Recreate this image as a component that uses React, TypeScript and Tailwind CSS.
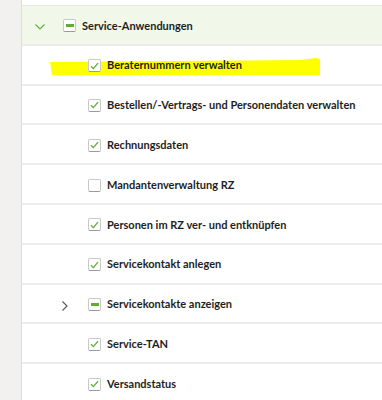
import React from 'react'

const items = [
  { id: 1, label: "Beraternummern verwalten", state: "checked", highlight: true },
  { id: 2, label: "Bestellen/-Vertrags- und Personendaten verwalten", state: "checked" },
  { id: 3, label: "Rechnungsdaten", state: "checked" },
  { id: 4, label: "Mandantenverwaltung RZ", state: "empty" },
  { id: 5, label: "Personen im RZ ver- und entknüpfen", state: "checked" },
  { id: 6, label: "Servicekontakt anlegen", state: "checked" },
  { id: 7, label: "Servicekontakte anzeigen", state: "partial", expandable: true },
  { id: 8, label: "Service-TAN", state: "checked" },
  { id: 9, label: "Versandstatus", state: "checked" },
]

const Checkbox = ( { state }: { state: string } ) => (
  <span className="relative flex items-center justify-center w-[13px] h-[13px] rounded-[2px] border border-[#c8c8c8] border-b-[#9a9a9a] bg-white shrink-0">
    { state === "checked" && (
      <svg width="9" height="8" viewBox="0 0 9 8" fill="none">
        <path d="M1 4.2 L3.4 6.6 L8 1.2" stroke="#5fae2e" strokeWidth="1.3" />
      </svg>
    ) }
    { state === "partial" && <span className="w-[8px] h-[3px] bg-[#5fae2e]" /> }
  </span>
)

const App = () => {
  return (
    <div className="relative flex w-[382px] h-[400px] overflow-hidden bg-white font-['Lato',sans-serif] text-[11px] font-bold text-[#1e1e1e]">

      <div className="w-[22px] shrink-0 bg-[#f2f1ef] border-r border-[#dedddb]" />

      <div className="flex-1">
        <div className="h-[6px] border-b border-[#e6e6e6]" />

        <div className="flex items-center h-[39.8px] pt-[2px] border-b-2 border-[#ececec] bg-[#f1f8e9]">
          <svg className="ml-[13px] mt-[3px]" width="10" height="6" viewBox="0 0 10 6" fill="none">
            <path d="M0.5 0.5 L5 5 L9.5 0.5" stroke="#5fae2e" strokeWidth="1.1" />
          </svg>
          <span className="ml-[18px] flex">
            <Checkbox state="partial" />
          </span>
          <span className="ml-[6px]">Service-Anwendungen</span>
        </div>

        { items.map( ( item ) => (
          <div key={ item.id } className="relative flex items-center h-[39.8px] pt-[2px] border-b-2 border-[#ececec]">
            { item.highlight && (
              <svg className="absolute left-[28px] top-[10px]" width="272" height="20" viewBox="0 0 272 20">
                <path d="M0 6 L250 4 L266 2 L270 3 L270 19 L2 19 Z" fill="#ffff00" />
              </svg>
            ) }
            <span className="relative w-[66px] flex justify-end pr-[20px]">
              { item.expandable && (
                <svg className="mt-[4px]" width="6" height="10" viewBox="0 0 6 10" fill="none">
                  <path d="M0.5 0.5 L5 5 L0.5 9.5" stroke="#555" strokeWidth="1.1" />
                </svg>
              ) }
            </span>
            <Checkbox state={ item.state } />
            <span className="relative ml-[6px]">{ item.label }</span>
          </div>
        ) ) }
      </div>

    </div>
  )
}

export default App
